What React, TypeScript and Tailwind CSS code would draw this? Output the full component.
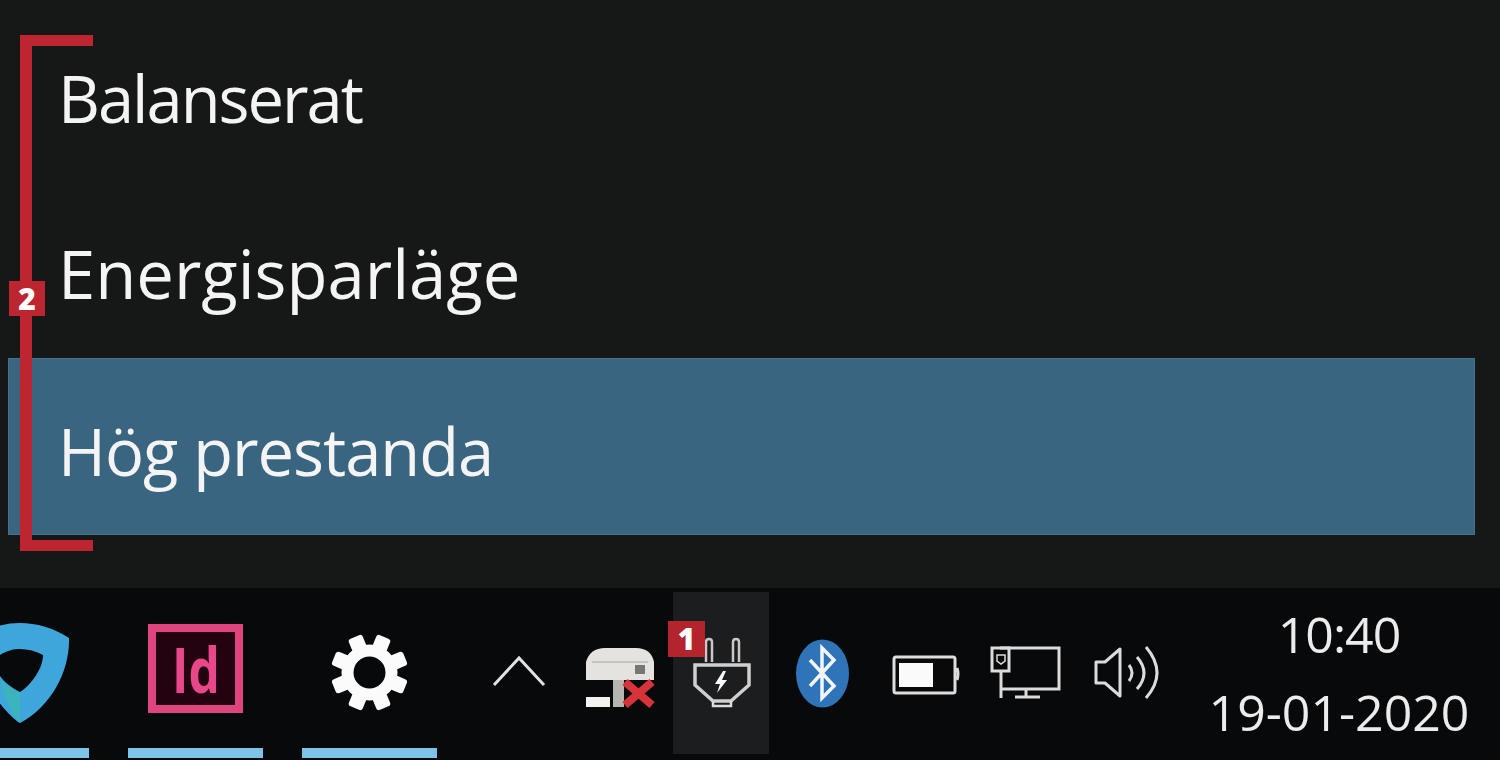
const plans = [
  { name: "Balanserat", text: "text-[65px] tracking-[-2px] pt-[12px]" },
  { name: "Energisparläge", text: "text-[67px] pt-[8px]" },
  { name: "Hög prestanda", text: "text-[65px] tracking-[-1px] pt-[10px]" },
];

function TrayIcon({ x, w, children }: { x: number; w: number; children: React.ReactNode }) {
  // viewBox uses the taskbar's own coordinates, so the paths read like the picture
  return (
    <svg width={w} height={172} viewBox={`${x} 588 ${w} 172`} fill="none" className="block">
      {children}
    </svg>
  );
}

function Gear() {
  const teeth = [0, 45, 90, 135, 180, 225, 270, 315];
  return (
    <svg width={135} height={160} viewBox="302 588 135 160" className="block">
      <circle cx="369.5" cy="672.5" r="22" fill="none" stroke="#fbfbfb" strokeWidth="12" />
      {teeth.map((a) => (
        <rect key={a} x="362" y="634" width="15" height="14" rx="3" fill="#fbfbfb" transform={`rotate(${a + 22.5} 369.5 672.5)`} />
      ))}
    </svg>
  );
}

export default function App() {
  return (
    <div className="relative w-[1500px] h-[760px] overflow-hidden bg-[#08090b] font-['Open_Sans','Noto_Sans',sans-serif]">
      {/* Power plan list */}
      <div className="h-[588px] bg-[#161717] pt-[4px] pl-[8px] pr-[25px]">
        {plans.map((plan, i) => (
          <div
            key={plan.name}
            className={`h-[177px] pl-[50px] flex items-center text-[#f4f4f4] leading-none ${plan.text} ${
              i === 2 ? "bg-[#396580] shadow-[inset_0_0_0_1px_#44728f]" : ""
            }`}
          >
            {plan.name}
          </div>
        ))}
      </div>

      {/* Taskbar */}
      <div className="h-[172px] flex">
        <div className="w-[89px] flex flex-col">
          <div className="flex-1">
            <svg width={89} height={160} viewBox="0 588 89 160" className="block">
              <path d="M20 623 C36 623 54 628 69 638 C70 670 52 706 20 723 C4 714 -28 670 -28 638 C-14 628 4 623 20 623Z" fill="#3fa6dc" />
              <path d="M0 680 C6 700 12 716 20 723 L20 692 C12 690 6 686 0 680Z" fill="#3cb4bd" />
              <path d="M0 655 C8 650 14 649 20 649 C28 649 36 651 43 655 C43 668 32 684 20 692 C12 688 4 682 0 676Z" fill="#08090b" />
            </svg>
          </div>
          <div className="h-[10px] mb-[2px] bg-[#7ec4e8]" />
        </div>
        <div className="w-[135px] ml-[39px] flex flex-col">
          <div className="flex-1 pt-[36px] pl-[20px]">
            <div className="w-[95px] h-[89px] border-[8px] border-[#e0447f] bg-[#23030f] flex items-center justify-center text-[#e8478a] text-[62px] leading-none font-bold">
              <span className="scale-x-[0.8]">Id</span>
            </div>
          </div>
          <div className="h-[10px] mb-[2px] bg-[#7ec4e8]" />
        </div>
        <div className="w-[135px] ml-[39px] flex flex-col">
          <div className="flex-1">
            <Gear />
          </div>
          <div className="h-[10px] mb-[2px] bg-[#7ec4e8]" />
        </div>

        <div className="w-[43px]" />
        <div className="w-[80px]">
          <TrayIcon x={480} w={80}>
            <path d="M494 685 L519 658 L544 685" stroke="#e2e2e2" strokeWidth="3" />
          </TrayIcon>
        </div>
        <div className="w-[113px]">
          <TrayIcon x={560} w={113}>
            <path d="M586 662 Q590 648 605 648 H636 Q651 648 654 662 V680 H586Z" fill="#e4e3df" />
            <path d="M592 662 H648" stroke="#c4c4c0" strokeWidth="2" />
            <rect x="635" y="665" width="10" height="9" fill="#777" />
            <rect x="613" y="680" width="11" height="27" fill="#b5b5b2" />
            <rect x="586" y="697" width="24" height="10" fill="#f2f2f0" />
            <path d="M625 682 L652 705 M652 682 L625 705" stroke="#d6343a" strokeWidth="8" />
          </TrayIcon>
        </div>
        <div className="w-[96px]">
          <div className="h-[162px] mt-[4px] bg-[#1c1d1e] overflow-hidden">
            <svg width={96} height={162} viewBox="673 592 96 162" fill="none" className="block">
              <path d="M706 662 V642 Q706 639 709 639 Q712 639 712 642 V662 M733 662 V642 Q733 639 736 639 Q739 639 739 642 V662" stroke="#c8c8c8" strokeWidth="2.5" />
              <path d="M695 665 H749 V685 L731 701 H713 L695 685Z" stroke="#cfcfcf" strokeWidth="3.5" />
              <path d="M713 701 V706 H731 V701" stroke="#dcdcdc" strokeWidth="2.5" />
              <path d="M723 671 L715 684 H720 L717 693 L727 680 H722 L726 671Z" fill="#f8f8f8" />
            </svg>
          </div>
        </div>
        <div className="w-[106px]">
          <TrayIcon x={769} w={106}>
            <ellipse cx="822.5" cy="673.5" rx="26.5" ry="34" fill="#2f74b8" />
            <path d="M810 660 L834 686 L822 698 V648 L834 660 L810 686" stroke="#f2f6fa" strokeWidth="3.5" />
          </TrayIcon>
        </div>
        <div className="w-[100px]">
          <TrayIcon x={875} w={100}>
            <rect x="894" y="657" width="61" height="36" rx="2" stroke="#dedede" strokeWidth="3" />
            <rect x="899" y="663" width="34" height="24" fill="#fafafa" />
            <path d="M957 668 Q959 674 957 680" stroke="#dedede" strokeWidth="3" />
          </TrayIcon>
        </div>
        <div className="w-[103px]">
          <TrayIcon x={975} w={103}>
            <path d="M1000 648 H1059 V689 H1001" stroke="#dcdcdc" strokeWidth="3" />
            <rect x="992" y="648" width="17" height="23" stroke="#dcdcdc" strokeWidth="3" />
            <path d="M1001 671 V698 M1026 689 V697 M1015 697 H1040" stroke="#dcdcdc" strokeWidth="3" />
            <path d="M997 655 H1005 V661 L1001 664 L997 661Z" stroke="#dcdcdc" strokeWidth="1.5" />
          </TrayIcon>
        </div>
        <div className="w-[112px]">
          <TrayIcon x={1078} w={112}>
            <path d="M1096 662 H1105 L1120 649 V696 L1105 683 H1096Z" stroke="#dcdcdc" strokeWidth="3" strokeLinejoin="round" />
            <path d="M1129 665 Q1135 673 1129 681" stroke="#dcdcdc" strokeWidth="3" />
            <path d="M1137 657 Q1151 673 1137 689" stroke="#dcdcdc" strokeWidth="3" />
            <path d="M1146 647 Q1168 673 1146 698" stroke="#dcdcdc" strokeWidth="3" />
          </TrayIcon>
        </div>

        {/* Clock */}
        <div className="w-[310px] pr-[12px] pt-[21px] flex flex-col items-center text-[#ececec] text-[50px] leading-none">
          <span className="h-[78px] tracking-[-1px]">10:40</span>
          <span>19-01-2020</span>
        </div>
      </div>

      {/* Annotations */}
      <div className="absolute left-[20px] top-[35px] w-[73px] h-[516px] border-y-[11px] border-[#bd2630]" />
      <div className="absolute left-[20px] top-[35px] w-[12px] h-[516px] bg-[#bd2630]" />
      <div className="absolute left-[9px] top-[281px] w-[36px] h-[35px] bg-[#bd2630] flex items-center justify-center text-white text-[30px] font-extrabold leading-none">
        2
      </div>
      <div className="absolute left-[668px] top-[621px] w-[37px] h-[36px] bg-[#b3242c] flex items-center justify-center text-white text-[30px] font-extrabold leading-none">
        1
      </div>
    </div>
  );
}
